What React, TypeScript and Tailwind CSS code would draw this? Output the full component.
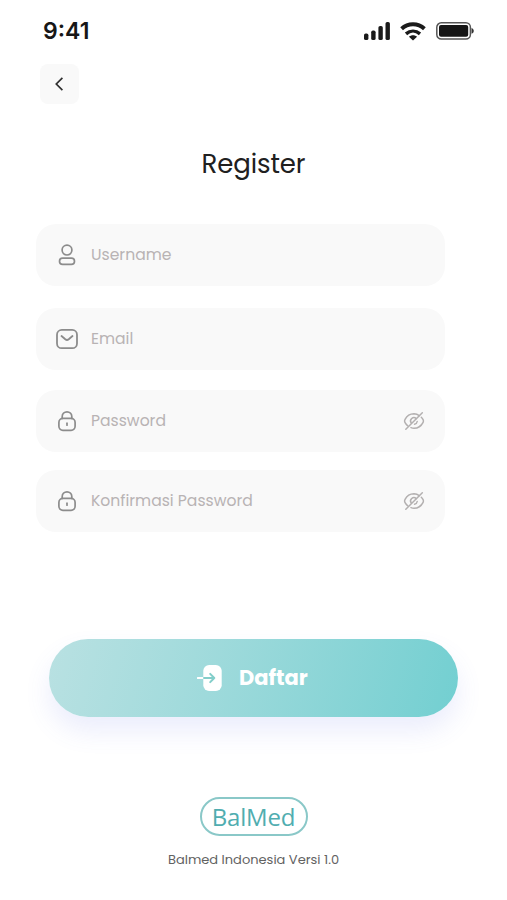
import React from 'react';

const SignalIcon: React.FC = () => (
  <svg className="block" width="27" height="19" viewBox="0 0 27 19" fill="#1a1a1a">
    <rect x="0" y="11.5" width="4.4" height="6.6" rx="1.7" />
    <rect x="7.2" y="8.5" width="4.4" height="9.6" rx="1.7" />
    <rect x="14.4" y="4" width="4.4" height="14.1" rx="1.7" />
    <rect x="21.5" y="0" width="4.4" height="18.1" rx="1.7" />
  </svg>
);

const WifiIcon: React.FC = () => (
  <svg className="block" width="26" height="19" viewBox="0 0 26 19" fill="none" stroke="#1a1a1a" strokeWidth="4">
    <path d="M1.6 6.800C8 .8 18 .8 24.400 6.800" />
    <path d="M6 11.900c4.200-3.700 9.800-3.700 14 0" strokeWidth="3.400" />
    <path d="M13 18.600 9 14.800c2.200-2 5.800-2 8 0Z" fill="#1a1a1a" stroke="none" />
  </svg>
);

const BatteryIcon: React.FC = () => (
  <svg className="block" width="39" height="18" viewBox="0 0 39 18">
    <rect x="0.8" y="0.8" width="33.600" height="16.200" rx="4.500" fill="none" stroke="#555" strokeWidth="1.500" />
    <rect x="3" y="3" width="29.200" height="11.800" rx="2" fill="#151515" />
    <path d="M35.500 6c3 .8 3 5 0 5.800Z" fill="#333" />
  </svg>
);

const UserIcon: React.FC = () => (
  <svg className="block" width="24" height="24" viewBox="0 0 24 24" fill="none" stroke="#8c8c8c" strokeWidth="1.7">
    <circle cx="12" cy="7.1" r="4.9" />
    <rect x="4.5" y="15.1" width="15" height="6.2" rx="3.1" />
  </svg>
);

const MailIcon: React.FC = () => (
  <svg className="block" width="24" height="24" viewBox="0 0 24 24" fill="none" stroke="#8c8c8c" strokeWidth="1.8" strokeLinecap="round" strokeLinejoin="round">
    <rect x="2" y="2.9" width="20" height="18.3" rx="4.8" />
    <path d="m6.5 9 3.8 3.3c1 .8 2.4.8 3.4 0L17.500 9" />
  </svg>
);

const LockIcon: React.FC = () => (
  <svg className="block" width="24" height="24" viewBox="0 0 24 24" fill="none" stroke="#8c8c8c" strokeWidth="1.7" strokeLinecap="round">
    <path d="M7.2 9.400V7.600a4.800 4.800 0 0 1 9.600 0v1.800" />
    <rect x="3.900" y="9.400" width="16.200" height="11.900" rx="4" />
    <path d="M12 14.200v2" />
  </svg>
);

const EyeOffIcon: React.FC = () => (
  <svg className="block" width="22" height="20" viewBox="0 0 22 20" fill="none" stroke="#b3b0b0" strokeWidth="1.5" strokeLinecap="round">
    <path d="M16.3 4.6A9.5 9.5 0 0 0 11 2.8C6.6 2.8 3.4 5.8 1.9 8.7c-.5.9-.5 1.7 0 2.6.7 1.3 1.700 2.600 2.900 3.500" />
    <path d="M8 16.600c1 .4 2 .6 3 .6 4.400 0 7.600-3 9.100-5.900.5-.9.5-1.700 0-2.600-.5-.9-1.100-1.700-1.800-2.400" />
    <path d="M13.200 7.600a3.300 3.300 0 0 0-4.900 4.400M14.200 10.500a3.200 3.200 0 0 1-2.700 2.700" />
    <path d="M19.300 1.700 2.800 18.200" />
  </svg>
);

const EnterIcon: React.FC = () => (
  <svg className="block" width="26" height="28" viewBox="0 0 26 28" fill="none" strokeLinecap="round" strokeLinejoin="round">
    <rect x="6.300" y="1" width="18.400" height="26" rx="5.800" fill="#fff" />
    <path d="M.8 14h5.500" stroke="#fff" strokeWidth="2" />
    <path d="M7 14h10.300M13.200 9.900l4.100 4.100-4.100 4.100" stroke="#83ceca" strokeWidth="2" />
  </svg>
);

interface FieldProps {
  label: string;
  icon: React.ReactNode;
  secret?: boolean;
  className?: string;
}

const Field: React.FC<FieldProps> = ({ label, icon, secret, className = '' }) => (
  <div className={`flex h-[62px] w-[409px] items-center rounded-[20px] bg-[#f9f9f9] pl-[19px] pr-5 ${className}`}>
    {icon}
    <span className="ml-3 flex-1 whitespace-nowrap text-[15.6px] text-[#b8b3b4]">{label}</span>
    {secret && <EyeOffIcon />}
  </div>
);

const App: React.FC = () => {
  return (
    <div className="flex h-[900px] w-[507px] flex-col overflow-hidden bg-white font-['Poppins',Inter,sans-serif]">
      <header className="flex h-[62px] shrink-0 items-center justify-between pl-[43px] pr-8">
        <span className="font-[Inter,sans-serif] text-[23px] font-semibold leading-none text-[#171717]">9:41</span>
        <div className="flex items-center">
          <SignalIcon />
          <div className="ml-[9px]"><WifiIcon /></div>
          <div className="ml-[10px]"><BatteryIcon /></div>
        </div>
      </header>

      <button className="ml-10 mt-[2px] flex h-10 w-[39px] shrink-0 items-center justify-center rounded-lg bg-[#f9f9f9]" aria-label="Back">
        <svg className="mr-[2px] mb-px" width="10" height="16" viewBox="0 0 10 16" fill="none" stroke="#303030" strokeWidth="1.7">
          <path d="M8.400 1.900 2.300 8l6.100 6.100" />
        </svg>
      </button>

      <h1 className="mt-[42px] h-9 text-center text-[26px] leading-9 tracking-[-0.1px] text-[#202020]">Register</h1>

      <form className="ml-9 mt-[42px] flex flex-col">
        <Field label="Username" icon={<UserIcon />} />
        <Field label="Email" icon={<MailIcon />} className="mt-[22px]" />
        <Field label="Password" icon={<LockIcon />} className="mt-5" secret />
        <Field label="Konfirmasi Password" icon={<LockIcon />} className="mt-[18px]" secret />
      </form>

      <button className="ml-[49px] mt-[107px] flex h-[78px] w-[409px] shrink-0 items-center rounded-full bg-linear-105 from-[#b9e1e2] to-[#72cfd1] pl-[148px] text-white shadow-[0_14px_26px_rgba(90,108,234,0.12)]">
        <EnterIcon />
        <span className="ml-4 text-[21px] font-bold">Daftar</span>
      </button>

      <footer className="mt-20 flex flex-col items-center">
        <div className="flex h-[39px] w-[108px] items-center justify-center rounded-full border-2 border-[#8ac8c8] font-['Open_Sans',sans-serif] text-2xl leading-none tracking-[-0.2px] text-[#50adb0]">
          BalMed
        </div>
        <p className="mt-[14px] whitespace-nowrap text-[13px] leading-5 text-[#626262]">Balmed Indonesia Versi 1.0</p>
      </footer>
    </div>
  );
};

export default App;
